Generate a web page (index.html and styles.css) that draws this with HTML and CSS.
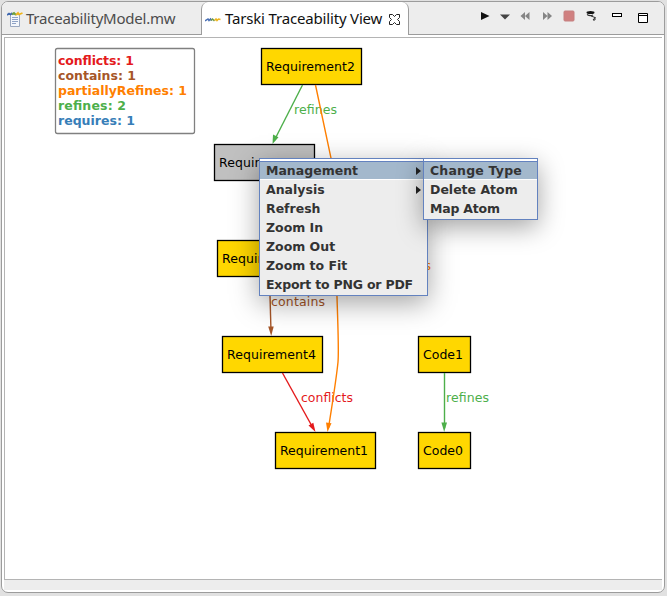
FILE: index.html
```html
<!DOCTYPE html>
<html lang="en">
<head>
<meta charset="utf-8">
<title>Tarski Traceability View</title>
<link rel="stylesheet" href="styles.css">
</head>
<body>
<main class="window">
  <header class="tabs">
    <div class="tab">
      <svg class="file-icon" width="16" height="17" viewBox="0 0 16 17">
        <path d="M3.500 3.500h9v12h-9z" fill="#f3f6fb" stroke="#9aa8c0"/>
        <path d="M5 6.500h6M5 8.500h6M5 10.500h6M5 12.500h4" stroke="#8fa3c6"/>
        <path d="M0 4l2-1.500 1.500 1 2-1.500" fill="none" stroke="#3f68b0" stroke-width="1.800"/>
        <path d="M5 3.500l2-1.500 2 2" fill="none" stroke="#6fa23e" stroke-width="1.800"/>
        <path d="M9 4l2-2 1 1.500 3.500-1.500" fill="none" stroke="#efb51a" stroke-width="1.800"/>
      </svg>
      <span class="tab-name name-file">TraceabilityModel.mw</span>
    </div>
    <div class="tab active">
      <svg class="view-icon" width="16" height="5" viewBox="0 0 16 5">
        <path d="M0 4l3-2 1 1.500 1.500-1.500 1 1.500" fill="none" stroke="#4a70b5" stroke-width="1.500"/>
        <path d="M6 3.500l1.500-1.500 2 2" fill="none" stroke="#6c9b50" stroke-width="1.500"/>
        <path d="M9.500 3.500l1.500-1.500 1 1.500 1.500-1.500 2 .5" fill="none" stroke="#edb51d" stroke-width="1.500"/>
      </svg>
      <span class="tab-name name-view">Tarski Traceability View</span>
      <svg class="close" width="11" height="11" viewBox="0 0 11 11">
        <path d="M.5.5h3l2 2 2-2h3v3l-2 2 2 2v3h-3l-2-2-2 2h-3v-3l2-2-2-2z" fill="#fff" stroke="#222"/>
      </svg>
    </div>
    <svg class="tools" width="196" height="32" viewBox="468 2 196 32">
      <path d="M481 12l8.500 4-8.500 4z" fill="#111"/>
      <path d="M500 14.500h10l-5 5z" fill="#444"/>
      <path d="M525 12v8l-4.500-4zM529.500 12v8l-4.500-4z" fill="#858585"/>
      <path d="M543 12v8l4.500-4zM547.500 12v8l4.500-4z" fill="#858585"/>
      <rect x="564" y="11" width="10" height="10" rx="1" fill="#d08080" stroke="#c58080"/>
      <ellipse cx="590.500" cy="12.500" rx="4" ry="1.500" fill="#111"/>
      <path d="M587 14.500q3 2 6 .5" fill="none" stroke="#333" stroke-width="1.200"/>
      <path d="M591 16l4 1.500v2.500h-2l2.500-3" fill="none" stroke="#333"/>
      <rect x="612.500" y="13.500" width="9" height="3" fill="#fff" stroke="#000"/>
      <path d="M638.500 13.500h9v9h-9zM638.500 15.500h9" fill="#fff" stroke="#000"/>
    </svg>
  </header>
  <section class="view">
    <svg class="graph" width="657" height="541" viewBox="5 38 657 541">
      <g class="boxes">
        <rect x="261.500" y="48.500" width="100" height="36"/>
        <rect class="selected" x="214.500" y="144.500" width="100" height="36"/>
        <rect x="217.500" y="240.500" width="100" height="36"/>
        <rect x="222.500" y="336.500" width="100" height="36"/>
        <rect x="275.500" y="432.500" width="100" height="36"/>
        <rect x="418.500" y="336.500" width="52" height="36"/>
        <rect x="418.500" y="432.500" width="52" height="36"/>
      </g>
      <g class="names">
        <text x="266" y="71" textLength="89">Requirement2</text>
        <text x="219" y="167" textLength="89">Requirement3</text>
        <text x="222" y="263" textLength="89">Requirement5</text>
        <text x="227" y="359" textLength="89">Requirement4</text>
        <text x="280" y="455" textLength="88">Requirement1</text>
        <text x="423" y="359" textLength="40">Code1</text>
        <text x="423" y="455" textLength="40">Code0</text>
        <text class="green-fill" x="294" y="114" textLength="43">refines</text>
        <text class="brown-fill" x="271" y="306" textLength="54">contains</text>
        <text class="red-fill" x="301" y="402" textLength="52">conflicts</text>
        <text class="green-fill" x="446" y="402" textLength="43">refines</text>
        <text class="orange-fill" x="334" y="270" textLength="97">partiallyRefines</text>
      </g>
      <g class="edges">
        <path class="green" d="M302.500 85L274 141"/>
        <path class="green-fill" d="M272.500 144l.5-9.500 5.500 2.800z"/>
        <path class="orange" d="M315.500 85L331 158C334 210 336 270 337 297C338 330 339 350 338 362C336 382 332 405 328.500 428"/>
        <path class="orange-fill" d="M327.500 432l-1.500-9.500 5.500.8z"/>
        <path class="brown" d="M269.500 277L271 332"/>
        <path class="brown-fill" d="M271.200 336l-3-9.500h5.500z"/>
        <path class="red" d="M282.500 373L313 428"/>
        <path class="red-fill" d="M315.500 432l-7-6.500 4.800-2.800z"/>
        <path class="green" d="M444.500 373V428"/>
        <path class="green-fill" d="M444.200 432l-2.800-9.500h5.600z"/>
      </g>
      <rect class="legend-box" x="55.500" y="48.500" width="139" height="85" rx="2"/>
      <g class="legend">
        <text class="red-fill" x="58" y="65" textLength="76">conflicts: 1</text>
        <text class="brown-fill" x="58" y="80" textLength="78">contains: 1</text>
        <text class="orange-fill" x="58" y="95" textLength="129">partiallyRefines: 1</text>
        <text class="green-fill" x="58" y="110" textLength="68">refines: 2</text>
        <text class="blue-fill" x="58" y="125" textLength="77">requires: 1</text>
      </g>
    </svg>
  </section>
  <footer class="status"></footer>
</main>
<nav class="menu main-menu">
  <div class="item on"><span>Management</span><i class="arrow"></i></div>
  <div class="item"><span>Analysis</span><i class="arrow"></i></div>
  <div class="item">Refresh</div>
  <div class="item">Zoom In</div>
  <div class="item">Zoom Out</div>
  <div class="item">Zoom to Fit</div>
  <div class="item tight">Export to PNG or PDF</div>
</nav>
<nav class="menu sub-menu">
  <div class="item on loose">Change Type</div>
  <div class="item">Delete Atom</div>
  <div class="item tight">Map Atom</div>
</nav>
</body>
</html>
```
FILE: styles.css
```css
* { box-sizing: border-box; }
body {
  margin: 0;
  padding: 1px 2px 3px 1px;
  width: 667px;
  height: 596px;
  overflow: hidden;
  background: #e1e1e1;
}
.window {
  display: flex;
  flex-direction: column;
  width: 664px;
  height: 592px;
  border: 1px solid #9c9c9c;
  border-radius: 7px;
  background: #fff;
  overflow: hidden;
}
.tabs {
  display: flex;
  flex: none;
  height: 33px;
  background: #ededed;
  border-bottom: 1px solid #9c9c9c;
}
.tab {
  display: flex;
  width: 199px;
  padding-left: 5px;
  color: #4c4c4c;
}
.tab.active {
  width: 208px;
  height: 33px;
  padding-left: 3px;
  background: #fff;
  border: 1px solid #9c9c9c;
  border-width: 0 1px;
  border-radius: 7px 7px 0 0;
  color: #111;
}
.tab-name {
  font: 15px/20px "Noto Sans", "Open Sans", sans-serif;
  margin-top: 6px;
  white-space: nowrap;
}
.name-file { width: 150px; margin-left: 3px; letter-spacing: -0.23px; }
.name-view { width: 159px; margin-left: 4px; letter-spacing: -0.17px; }
.file-icon { margin-top: 9px; }
.view-icon { margin-top: 15px; }
.close { margin: 12px 0 0 5px; }
.tools { margin-left: auto; }
.view {
  flex: none;
  height: 543px;
  margin: 2px 2px 0;
  border: 1px solid #b4b4b4;
  border-right: 0;
}
.graph { display: block; }
.status { height: 10px; margin: 0 2px; background: #ededed; }

.edges path { fill: none; stroke-width: 1.4; }
.boxes rect { fill: #ffd700; stroke: #000; stroke-width: 1.3; }
.boxes .selected { fill: #c0c0c0; }
.names { font: 12.5px "DejaVu Sans", sans-serif; }
.legend { font: bold 12.5px "DejaVu Sans", sans-serif; }
.legend-box { fill: #fff; stroke: #808080; stroke-width: 1.3; }
.green { stroke: #4daf4a; }
.orange { stroke: #ff7f00; }
.brown { stroke: #a65628; }
.red { stroke: #e41a1c; }
.green-fill, .edges .green-fill { fill: #4daf4a; }
.orange-fill, .edges .orange-fill { fill: #ff7f00; }
.brown-fill, .edges .brown-fill { fill: #a65628; }
.red-fill, .edges .red-fill { fill: #e41a1c; }
.blue-fill { fill: #377eb8; }

.menu {
  position: absolute;
  padding-top: 2px;
  background: #ededed;
  border: 1px solid #6382bf;
  box-shadow: 0 7px 26px rgba(0, 0, 0, 0.36);
  font: bold 12.5px/17px "DejaVu Sans", sans-serif;
  color: #333;
}
.main-menu { left: 259px; top: 158px; width: 169px; height: 138px; }
.sub-menu { left: 423px; top: 158px; width: 115px; height: 62px; }
.item {
  display: flex;
  align-items: center;
  justify-content: space-between;
  height: 19px;
  padding: 0 6px;
  white-space: nowrap;
}
.item.on {
  background: #a3b8cc;
  border-top: 1px solid #6382bf;
  border-bottom: 1px solid #fff;
  box-shadow: 0 -2px #fff;
}
.tight { letter-spacing: -0.2px; }
.loose { letter-spacing: 0.2px; }
.arrow {
  border: solid transparent;
  border-width: 4.5px 0 4.5px 5px;
  border-left-color: #222;
}
```
